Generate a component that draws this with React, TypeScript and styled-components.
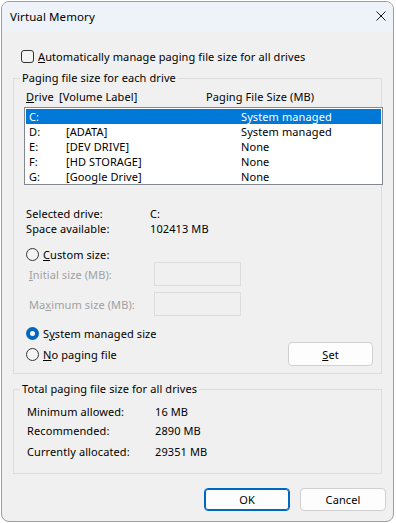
import * as React from "react";
import styled, { createGlobalStyle } from "styled-components";

const GlobalStyle = createGlobalStyle`
  html, body {
    margin: 0;
    padding: 0;
    background: #ffffff;
  }
  body {
    font-family: "Segoe UI", "Noto Sans", "Open Sans", sans-serif;
    font-size: 11px;
    letter-spacing: 0.1px;
    color: #000000;
  }
  * {
    box-sizing: border-box;
  }
`;

const Window = styled.div`
  margin: 1px 0 0 1px;
  width: 393px;
  height: 521px;
  border: 1px solid #9e9e9e;
  border-radius: 8px;
  background: #f0f0f0;
  overflow: hidden;
  display: flex;
  flex-direction: column;
`;

const TitleBar = styled.div`
  height: 30px;
  flex: none;
  background: #eef3f9;
  display: flex;
  align-items: center;
  justify-content: space-between;
  padding: 0 7px 2px 8px;
`;

const Title = styled.span`
  font-size: 11.5px;
`;

const Body = styled.div`
  flex: 1;
  display: flex;
  flex-direction: column;
`;

const CheckRow = styled.label`
  display: flex;
  align-items: center;
  gap: 4px;
  height: 13px;
  margin: 18px 0 0 19px;
`;

const CheckBox = styled.span`
  width: 13px;
  height: 13px;
  border: 1px solid #333333;
  border-radius: 3px;
  background: #f4f4f4;
  flex: none;
`;

const Group = styled.div<{ $height: number; $top: number }>`
  position: relative;
  margin: ${(p) => p.$top}px 0 0 11px;
  width: 369px;
  height: ${(p) => p.$height}px;
  border: 1px solid #dcdcdc;
  display: flex;
  flex-direction: column;
`;

const Legend = styled.span`
  position: absolute;
  top: -9px;
  left: 6px;
  padding: 0 2px;
  background: #f0f0f0;
  line-height: 15px;
`;

const HeaderRow = styled.div`
  display: grid;
  grid-template-columns: 33px 147px 1fr;
  height: 15px;
  line-height: 15px;
  margin: 10px 0 0 12px;
`;

const ListBox = styled.div`
  margin: 3px 0 0 10px;
  width: 359px;
  height: 78px;
  border: 1px solid #828790;
  background: #ffffff;
  padding: 1px;
`;

const ListRow = styled.div<{ $selected?: boolean }>`
  display: grid;
  grid-template-columns: 37px 175px 1fr;
  height: 15px;
  line-height: 15px;
  padding-left: 3px;
  background: ${(p) => (p.$selected ? "#0078d7" : "transparent")};
  color: ${(p) => (p.$selected ? "#ffffff" : "#000000")};
`;

const InfoRow = styled.div<{ $top?: number; $left: number; $label: number }>`
  display: grid;
  grid-template-columns: ${(p) => p.$label}px 1fr;
  height: 15px;
  line-height: 15px;
  margin: ${(p) => p.$top ?? 0}px 0 0 ${(p) => p.$left}px;
`;

const RadioRow = styled.div<{ $top: number }>`
  display: flex;
  align-items: center;
  gap: 4px;
  height: 15px;
  margin: ${(p) => p.$top}px 0 0 12px;
`;

const Radio = styled.span<{ $checked?: boolean }>`
  width: 13px;
  height: 13px;
  border-radius: 50%;
  flex: none;
  border: ${(p) => (p.$checked ? "none" : "1px solid #333333")};
  background: ${(p) => (p.$checked ? "#0067c0" : "#f4f4f4")};
  display: flex;
  align-items: center;
  justify-content: center;

  &::after {
    content: "";
    display: ${(p) => (p.$checked ? "block" : "none")};
    width: 5px;
    height: 5px;
    border-radius: 50%;
    background: #ffffff;
  }
`;

const SizeRow = styled.div<{ $top: number }>`
  display: flex;
  align-items: center;
  height: 24px;
  margin: ${(p) => p.$top}px 0 0 15px;
  color: #a0a0a0;
`;

const SizeLabel = styled.span`
  width: 125px;
`;

const SizeInput = styled.span`
  width: 87px;
  height: 24px;
  border: 1px solid #dcdcdc;
  background: #f0f0f0;
`;

const SetRow = styled.div`
  display: flex;
  align-items: center;
  gap: 4px;
  height: 24px;
  margin: 1px 8px 0 12px;
`;

const Button = styled.button<{ $default?: boolean }>`
  font: inherit;
  letter-spacing: inherit;
  color: #000000;
  width: 86px;
  height: 23px;
  padding: 0;
  background: #fdfdfd;
  border-radius: 4px;
  border: 1px solid ${(p) => (p.$default ? "#0067c0" : "#d0d0d0")};
  box-shadow: ${(p) => (p.$default ? "inset 0 0 0 1px #0067c0" : "none")};
`;

const SetButton = styled(Button)`
  margin-left: auto;
  width: 85px;
  height: 24px;
`;

const TotalRow = styled.div<{ $top: number }>`
  display: grid;
  grid-template-columns: 128px 1fr;
  height: 15px;
  line-height: 15px;
  margin: ${(p) => p.$top}px 0 0 13px;
`;

const Footer = styled.div`
  display: flex;
  justify-content: flex-end;
  gap: 10px;
  margin: 14px 7px 0 0;
`;

const drives = [
  { letter: "C:", label: "", size: "System managed" },
  { letter: "D:", label: "[ADATA]", size: "System managed" },
  { letter: "E:", label: "[DEV DRIVE]", size: "None" },
  { letter: "F:", label: "[HD STORAGE]", size: "None" },
  { letter: "G:", label: "[Google Drive]", size: "None" },
];

const totals = [
  { label: "Minimum allowed:", value: "16 MB", top: 14 },
  { label: "Recommended:", value: "2890 MB", top: 4 },
  { label: "Currently allocated:", value: "29351 MB", top: 6 },
];

const CloseIcon = () => (
  <svg width="10" height="10" viewBox="0 0 10 10">
    <path d="M0.5 0.5 L9.5 9.5 M9.5 0.5 L0.5 9.5" stroke="#1a1a1a" strokeWidth="1" />
  </svg>
);

export default function App() {
  return (
    <>
      <GlobalStyle />
      <Window>
        <TitleBar>
          <Title>Virtual Memory</Title>
          <CloseIcon />
        </TitleBar>
        <Body>
          <CheckRow>
            <CheckBox />
            <span>
              <u>A</u>utomatically manage paging file size for all drives
            </span>
          </CheckRow>

          <Group $top={15} $height={296}>
            <Legend>Paging file size for each drive</Legend>
            <HeaderRow>
              <span>
                <u>D</u>rive
              </span>
              <span>[Volume Label]</span>
              <span>Paging File Size (MB)</span>
            </HeaderRow>
            <ListBox>
              {drives.map((d, i) => (
                <ListRow key={d.letter} $selected={i === 0}>
                  <span>{d.letter}</span>
                  <span>{d.label}</span>
                  <span>{d.size}</span>
                </ListRow>
              ))}
            </ListBox>

            <InfoRow $top={21} $left={12} $label={124}>
              <span>Selected drive:</span>
              <span>C:</span>
            </InfoRow>
            <InfoRow $left={12} $label={124}>
              <span>Space available:</span>
              <span>102413 MB</span>
            </InfoRow>

            <RadioRow $top={11}>
              <Radio />
              <span>
                <u>C</u>ustom size:
              </span>
            </RadioRow>
            <SizeRow $top={0}>
              <SizeLabel>
                <u>I</u>nitial size (MB):
              </SizeLabel>
              <SizeInput />
            </SizeRow>
            <SizeRow $top={6}>
              <SizeLabel>
                Ma<u>x</u>imum size (MB):
              </SizeLabel>
              <SizeInput />
            </SizeRow>

            <RadioRow $top={10}>
              <Radio $checked />
              <span>
                S<u>y</u>stem managed size
              </span>
            </RadioRow>
            <SetRow>
              <Radio />
              <span>
                <u>N</u>o paging file
              </span>
              <SetButton>
                <u>S</u>et
              </SetButton>
            </SetRow>
          </Group>

          <Group $top={15} $height={85}>
            <Legend>Total paging file size for all drives</Legend>
            {totals.map((t) => (
              <TotalRow key={t.label} $top={t.top}>
                <span>{t.label}</span>
                <span>{t.value}</span>
              </TotalRow>
            ))}
          </Group>

          <Footer>
            <Button $default>OK</Button>
            <Button>Cancel</Button>
          </Footer>
        </Body>
      </Window>
    </>
  );
}
